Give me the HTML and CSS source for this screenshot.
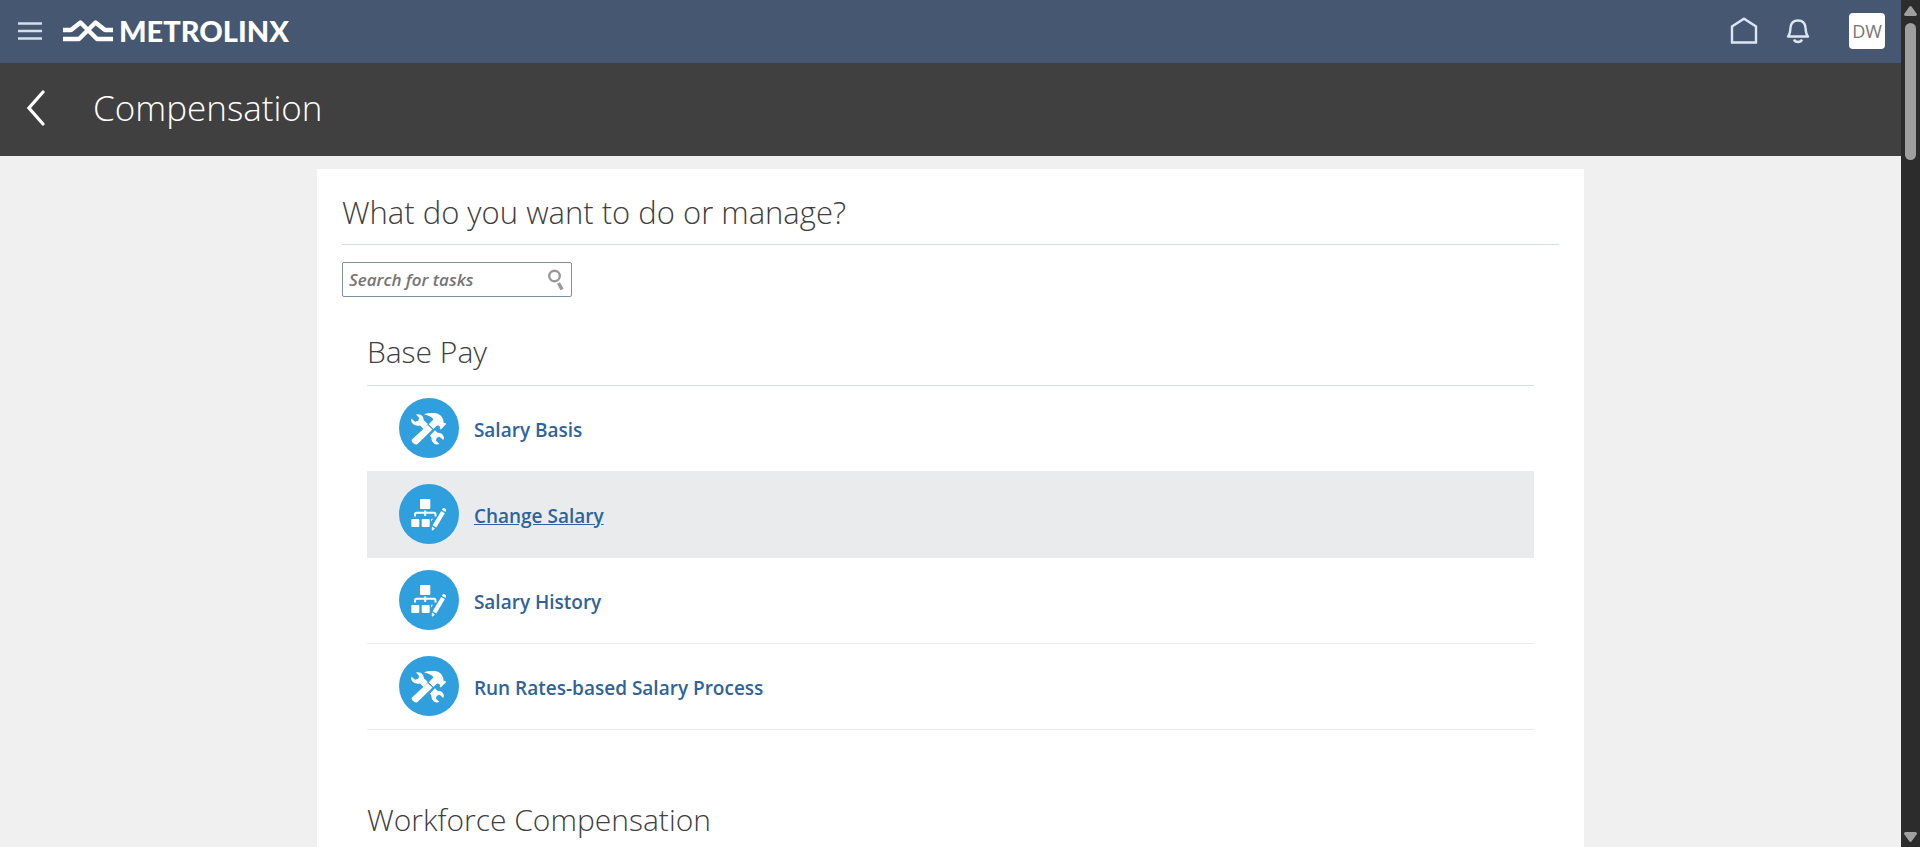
FILE: index.html
```html
<!DOCTYPE html>
<html lang="en">
<head>
<meta charset="utf-8">
<title>Compensation</title>
<link rel="stylesheet" href="styles.css">
</head>
<body>
<svg class="sprite" aria-hidden="true">
  <symbol id="tools" viewBox="0 0 60 60">
    <circle cx="30" cy="30" r="30" fill="#309fdd"/>
    <g fill="#fff">
      <path d="M17 16.500 Q22 15.500 24.200 19.500 Q24.800 21.500 25 22.500 L29 26 L24.500 31 L21 27.500 Q15.500 28.500 13 25 Q11.800 22.500 12.300 20.500 L16.200 23.800 L19.200 22.800 L20.200 20 Z"/>
      <path d="M31 37.500 L36 32.300 L38.500 34.800 Q42.500 34.500 44.500 38 Q45.500 40.500 44.300 42 L40.500 38.800 L37.800 39.800 L36.800 42.600 L40.300 46 Q35.500 47.500 33.200 43.500 Q32.200 41.500 32.500 39.800 Z"/>
      <path d="M28.700 27 L33.500 31.500 L18.500 45.900 Q16.500 47.400 14 45 Q11.700 43 13.200 41.300 Z"/>
      <path d="M25 16.500 Q27 14.800 31 15 L36 15 Q42.500 16 44.300 22 L44.500 24.500 L45.300 25.300 L46 24.700 L47.200 26 L41.800 31.600 L40.600 30.300 L41.200 29.300 Q40 26.800 37.500 28 L34.200 31 L29.600 26.400 L34.500 21.300 Q31.500 17.500 25 16.500 Z"/>
    </g>
    <path d="M28.500 25.700 L34 31.200" stroke="#309fdd" stroke-width="1"/>
  </symbol>
  <symbol id="chart" viewBox="0 0 60 60">
    <circle cx="30" cy="30" r="30" fill="#309fdd"/>
    <g fill="#fff">
      <rect x="21" y="15" width="10.300" height="10" rx="1"/>
      <rect x="12.300" y="35" width="8" height="8" rx="1"/>
      <rect x="22.700" y="35" width="8" height="8" rx="1"/>
      <path d="M32 37.500 V35.500 Q32 34.800 33 34.800 H34 Z"/>
      <path d="M42.300 27 L45.800 29.300 L37.300 43.600 L33.600 41.300 Z"/>
      <path d="M43.600 24.800 Q44.300 23.600 45.500 24.300 L46.500 25 Q47.500 25.700 46.900 26.800 L46.400 27.900 L42.900 25.800 Z"/>
      <path d="M33 42.500 L36 44.500 L33.800 46.500 Q32.600 46.700 32.700 45.500 Z"/>
    </g>
    <path d="M16 32.500 V30.500 Q16 28.800 17.700 28.800 H35 Q36.500 28.800 36.500 30.500 V32.500 M26.200 26.500 V32" fill="none" stroke="#fff" stroke-width="2"/>
  </symbol>
</svg>
<div class="window">
  <div class="page">
    <header class="topbar">
      <button class="icon-button" aria-label="Navigator">
        <svg width="24" height="18" viewBox="0 0 24 18"><path d="M0 1.500H24M0 9H24M0 16.500H24" stroke="#d5deeb" stroke-width="2.400"/></svg>
      </button>
      <a class="brand" href="#">
        <svg width="50" height="22" viewBox="0 0 50 22" fill="none" stroke="#fff" stroke-width="4.500" stroke-linejoin="round"><path d="M0 10H8L17.500 2.500L34 19H50"/><path d="M0 19H16L32.500 2.500L42 10H50"/></svg>
        <span class="brand-name">METROLINX</span>
      </a>
      <nav class="tools">
        <a class="tool" href="#" aria-label="Home"><svg width="28" height="28" viewBox="0 0 28 28"><path d="M2 25.500V9.500L14 1.800L26 9.500V25.500Z" fill="none" stroke="#dbe5f3" stroke-width="2.400"/></svg></a>
        <button class="tool" aria-label="Notifications"><svg width="24" height="26" viewBox="0 0 24 26" fill="none" stroke="#dbe5f3" stroke-width="2.400"><path d="M2 18.500H22C19.500 16 20 13 19.500 9.500C19 5 16 2.500 12 2.500S5 5 4.500 9.500C4 13 4.500 16 2 18.500Z" stroke-linejoin="round"/><path d="M8 21.500Q9 24 12 24T16 21.500"/></svg></button>
        <button class="avatar" aria-label="Settings and actions">DW</button>
      </nav>
    </header>
    <div class="titlebar">
      <button class="icon-button" aria-label="Back"><svg width="18" height="36" viewBox="0 0 18 36"><path d="M16 2L2 18L16 34" fill="none" stroke="#fff" stroke-width="3.200" stroke-linecap="round"/></svg></button>
      <h1 class="title">Compensation</h1>
    </div>
    <main class="content">
      <div class="card">
        <h2 class="heading">What do you want to do or manage?</h2>
        <form class="search" role="search">
          <input class="search-input" type="text" aria-label="Search for tasks" placeholder="Search for tasks">
          <button class="search-button" type="button" aria-label="Search"><svg width="16" height="21" viewBox="0 0 16 21" fill="none" stroke="#999"><circle cx="6.500" cy="7" r="5.300" stroke-width="2.400"/><path d="M10.500 14L14 20.500" stroke-width="3.400"/></svg></button>
        </form>
        <section class="group">
          <h3 class="heading group-heading">Base Pay</h3>
          <ul class="tasks">
            <li class="task"><svg class="task-icon"><use href="#tools"/></svg><a class="task-link" href="#">Salary Basis</a></li>
            <li class="task task-active"><svg class="task-icon"><use href="#chart"/></svg><a class="task-link" href="#">Change Salary</a></li>
            <li class="task"><svg class="task-icon"><use href="#chart"/></svg><a class="task-link" href="#">Salary History</a></li>
            <li class="task"><svg class="task-icon"><use href="#tools"/></svg><a class="task-link" href="#">Run Rates-based Salary Process</a></li>
          </ul>
        </section>
        <section class="group">
          <h3 class="heading group-heading">Workforce Compensation</h3>
        </section>
      </div>
    </main>
  </div>
  <div class="scrollbar" aria-hidden="true">
    <svg width="13" height="10" viewBox="0 0 13 10"><path d="M5.300 .8Q6.500 -.6 7.700 .8L12.700 7.800Q13.500 9.700 11.500 10H1.500Q-.5 9.700 .3 7.800Z" fill="#9f9f9f"/></svg>
    <div class="thumb"></div>
    <svg class="arrow-down" width="13" height="10" viewBox="0 0 13 10"><path d="M5.300 9.200Q6.500 10.600 7.700 9.200L12.700 2.200Q13.500 .3 11.500 0H1.500Q-.5 .3 .3 2.200Z" fill="#9f9f9f"/></svg>
  </div>
</div>
</body>
</html>
```

FILE: styles.css
```css
* { box-sizing: border-box; }
body {
  margin: 0;
  font-family: "Open Sans", "Noto Sans", sans-serif;
  color: #404040;
  overflow: hidden;
}
button { border: 0; padding: 0; background: none; font: inherit; cursor: pointer; }
svg { display: block; }
h1, h2, h3, ul { margin: 0; padding: 0; font-weight: 300; }
.sprite { display: none; }

.window { display: flex; height: 100vh; }
.page { flex: 1; min-width: 0; overflow: hidden; background: #f0f0f0; }

.topbar {
  display: flex;
  align-items: center;
  height: 63px;
  padding: 0 16px 2px 18px;
  background: #465772;
}
.brand { display: flex; align-items: center; gap: 6px; margin-left: 21px; color: #fff; text-decoration: none; }
.brand-name { font: 900 29px/32px Lato, sans-serif; }
.tools { display: flex; align-items: center; margin-left: auto; }
.tool { margin-right: 28px; }
.tool + .avatar { margin-left: 11px; }
.avatar {
  width: 36px;
  height: 36px;
  border-radius: 4px;
  background: #fff;
  color: #757575;
  font-size: 18px;
}

.titlebar { display: flex; align-items: center; height: 93px; padding: 0 27px 3px; gap: 48px; background: #404040; }
.title { color: #fff; font-size: 35px; line-height: 48px; }

.content { display: flex; justify-content: center; padding-top: 13px; }
.card { width: 66.66%; padding: 19px 25px; background: #fff; }
.heading {
  padding-bottom: 8px;
  border-bottom: 1px solid #d6dfe6;
  font-size: 31px;
  line-height: 48px;
}
.group-heading { padding-bottom: 9px; font-size: 30px; }
.search { display: flex; align-items: center; width: 230px; height: 35px; margin-top: 17px; border: 1px solid #7d909e; border-radius: 2px; }
.search-input {
  flex: 1;
  min-width: 0;
  padding: 0 6px;
  border: 0;
  outline: 0;
  background: none;
  font: italic 600 17px/24px "Open Sans", sans-serif;
}
.search-input::placeholder { color: #757575; }
.search-button { margin-right: 7px; }

.group { margin: 31px 25px 66px; }
.tasks { list-style: none; }
.task { display: flex; align-items: center; gap: 15px; height: 86px; padding: 0 0 1px 32px; border-bottom: 1px solid #ebebeb; }
.task-active { background: #eaebed; }
.task-icon { width: 60px; height: 60px; }
.task-link { padding-top: 3px; color: #2f6399; font-size: 19px; font-weight: 600; line-height: 28px; text-decoration: none; }
.task-active .task-link { text-decoration: underline; }

.scrollbar { display: flex; flex-direction: column; align-items: center; width: 19px; padding: 6px 0 5px; background: #2c2c2c; }
.thumb { width: 11px; height: 137px; margin-top: 7px; border-radius: 6px; background: #9f9f9f; }
.arrow-down { margin-top: auto; }
```
